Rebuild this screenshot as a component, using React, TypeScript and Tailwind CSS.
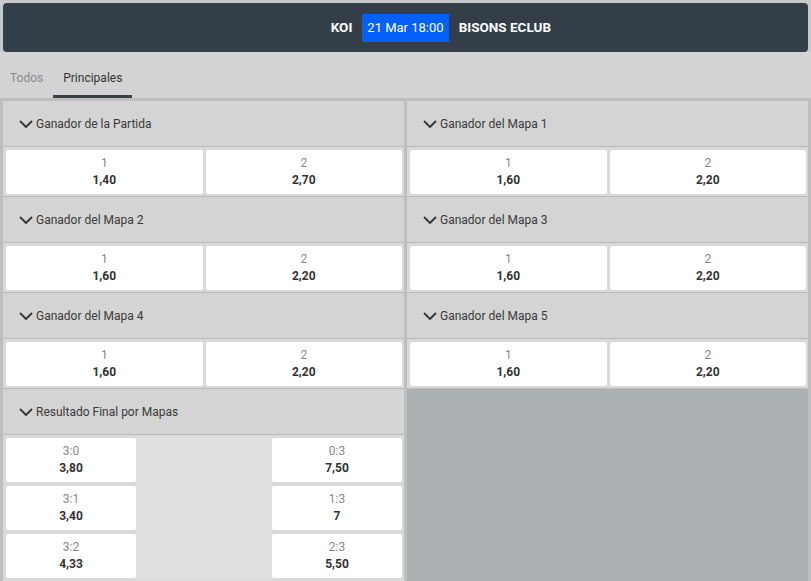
import React from 'react';

type Odd = { label: string; value: string };
type Market = { title: string; odds: Odd[] };

const LEFT: Market[] = [
  { title: 'Ganador de la Partida', odds: [{ label: '1', value: '1,40' }, { label: '2', value: '2,70' }] },
  { title: 'Ganador del Mapa 2', odds: [{ label: '1', value: '1,60' }, { label: '2', value: '2,20' }] },
  { title: 'Ganador del Mapa 4', odds: [{ label: '1', value: '1,60' }, { label: '2', value: '2,20' }] },
];

const RIGHT: Market[] = [
  { title: 'Ganador del Mapa 1', odds: [{ label: '1', value: '1,60' }, { label: '2', value: '2,20' }] },
  { title: 'Ganador del Mapa 3', odds: [{ label: '1', value: '1,60' }, { label: '2', value: '2,20' }] },
  { title: 'Ganador del Mapa 5', odds: [{ label: '1', value: '1,60' }, { label: '2', value: '2,20' }] },
];

// rows of [home, away] for the correct score market
const SCORES: [Odd, Odd][] = [
  [{ label: '3:0', value: '3,80' }, { label: '0:3', value: '7,50' }],
  [{ label: '3:1', value: '3,40' }, { label: '1:3', value: '7' }],
  [{ label: '3:2', value: '4,33' }, { label: '2:3', value: '5,50' }],
];

function OddButton({ odd }: { odd: Odd }) {
  return (
    <button className="h-[44px] bg-white rounded-[2px] flex flex-col items-center justify-center text-[12px] leading-[17px] cursor-pointer">
      <span className="text-[#888888]">{odd.label}</span>
      <span className="text-[#333] font-bold">{odd.value}</span>
    </button>
  );
}

function MarketHeader({ title }: { title: string }) {
  return (
    <div className="h-[46px] flex items-center pl-[16px] gap-[5px] bg-[#d4d4d4] border-b border-[#bababa] text-[12px] text-[#3a3a3a]">
      <svg width="14" height="8" viewBox="0 0 14 8" fill="none" className="mt-[1px]">
        <path d="M1 1l6 6 6-6" stroke="#333" strokeWidth="1.8" />
      </svg>
      <span className="-ml-[2px]">{title}</span>
    </div>
  );
}

function MarketBlock({ market }: { market: Market }) {
  return (
    <div>
      <MarketHeader title={market.title} />
      <div className="grid grid-cols-2 gap-[3px] pt-[3px] pb-[2px] pl-[3px] pr-[2px] bg-[#d9d9d9] border-b border-[#bababa]">
        {market.odds.map((o) => (
          <OddButton key={o.label} odd={o} />
        ))}
      </div>
    </div>
  );
}

export default function App() {
  return (
    <div className="w-[811px] h-[581px] overflow-hidden bg-[#d3d3d3] font-['Roboto','Liberation_Sans',sans-serif]">
      {/* Event header */}
      <div className="bg-[#c6cacd] pt-[3px] px-[3px]">
        <div className="h-[49px] rounded-[4px] bg-[#343e48] grid grid-cols-[1fr_auto_1fr] items-center gap-[10px] text-white">
          <span className="justify-self-end font-bold text-[13.5px]">KOI</span>
          <span className="h-[28px] px-[5px] flex items-center bg-[#0560fa] text-[13px]">21 Mar 18:00</span>
          <span className="justify-self-start font-bold text-[13.5px]">BISONS ECLUB</span>
        </div>
      </div>

      {/* Tabs */}
      <div className="h-[46px] flex items-stretch text-[12px]">
        <button className="px-[10px] pt-[5px] text-[#8a8a8a]">Todos</button>
        <button className="px-[10px] pt-[8px] text-[#333] border-b-[3px] border-[#3b4046]">Principales</button>
      </div>

      {/* Markets */}
      <div className="bg-[#bebebe] pt-[3px] px-[3px] grid grid-cols-2 gap-x-[3px] items-stretch h-full">
        <div className="flex flex-col bg-[#d9d9d9]">
          {LEFT.map((m) => (
            <MarketBlock key={m.title} market={m} />
          ))}
          <div>
            <MarketHeader title="Resultado Final por Mapas" />
            <div className="grid grid-cols-3 gap-x-[3px] gap-y-[4px] pt-[3px] pl-[3px] pr-[2px] bg-[#d9d9d9]">
              {SCORES.map(([home, away]) => (
                <React.Fragment key={home.label}>
                  <OddButton odd={home} />
                  <div className="bg-[#e0e0e0] -mx-[3px] -my-[2px]" />
                  <OddButton odd={away} />
                </React.Fragment>
              ))}
            </div>
          </div>
        </div>
        <div className="flex flex-col bg-[#abb0b2]">
          {RIGHT.map((m) => (
            <MarketBlock key={m.title} market={m} />
          ))}
        </div>
      </div>
    </div>
  );
}
